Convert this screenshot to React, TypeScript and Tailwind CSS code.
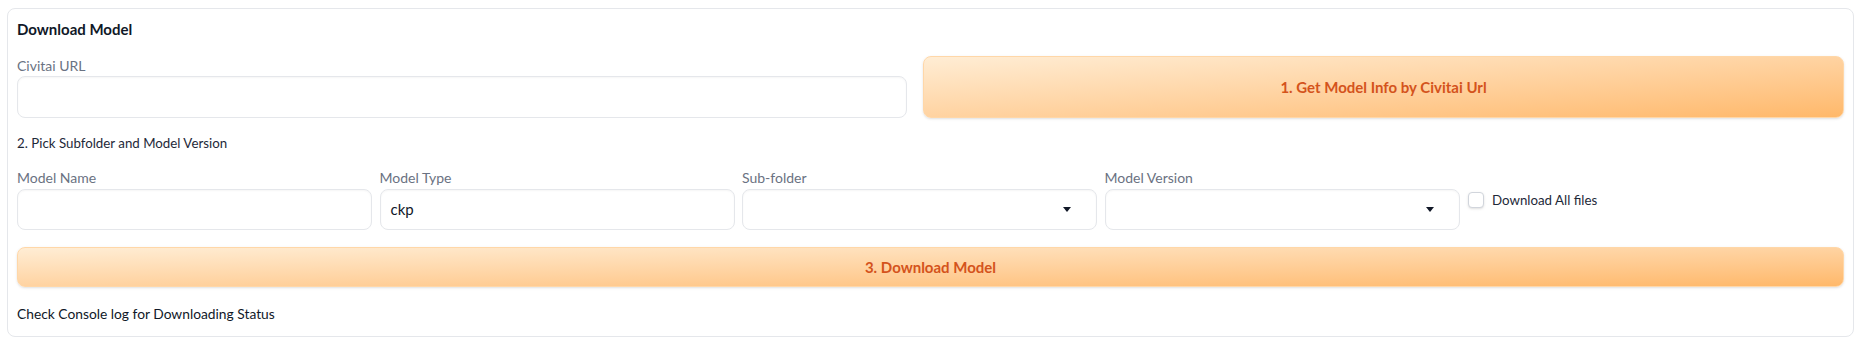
import React from "react";

const font = { fontFamily: '"Lato", "Liberation Sans", sans-serif' };

function Caret() {
  return (
    <svg width="8" height="5" viewBox="0 0 8 5" className="shrink-0">
      <path d="M0 0 L8 0 L4 5 Z" fill="#111827" />
    </svg>
  );
}

function Field({ label, value, dropdown }: { label: string; value?: string; dropdown?: boolean }) {
  return (
    <div className="flex flex-col w-[355px] shrink-0">
      <div className="h-[20px] leading-[20px] text-[14px] text-gray-500">{label}</div>
      <div className="mt-px h-[41px] rounded-lg border border-gray-200 bg-white shadow-[inset_0_1px_2px_rgba(0,0,0,0.04)] flex items-center px-[10px] justify-between">
        <span className="text-[15px] text-gray-900">{value ?? ""}</span>
        {dropdown && <span className="mr-[15px] flex items-center"><Caret /></span>}
      </div>
    </div>
  );
}

export default function App() {
  return (
    <div className="bg-white w-full h-[347px] pt-[8px] px-[7px]" style={font}>
      <div className="border border-gray-200 rounded-lg pt-[11px] pb-[12px] px-[9px] flex flex-col">
        <div className="h-[19px] leading-[19px] text-[15px] font-bold text-gray-900">Download Model</div>

        <div className="mt-[17px] flex gap-[16px]">
          <div className="flex-1 flex flex-col">
            <div className="h-[20px] leading-[20px] text-[14px] text-gray-500">Civitai URL</div>
            <div className="h-[42px] rounded-lg border border-gray-200 bg-white shadow-[inset_0_1px_2px_rgba(0,0,0,0.04)]" />
          </div>
          <button className="w-[921px] h-[62px] rounded-lg border border-orange-200 bg-gradient-to-br from-orange-100 to-orange-300 text-[#d4531c] font-bold text-[15px] shadow-sm">
            1. Get Model Info by Civitai Url
          </button>
        </div>

        <div className="mt-[15px] h-[20px] leading-[20px] text-[13.3px] text-gray-800">2. Pick Subfolder and Model Version</div>

        <div className="mt-[15px] flex gap-[7.5px]">
          <Field label="Model Name" />
          <Field label="Model Type" value="ckp" />
          <Field label="Sub-folder" dropdown />
          <Field label="Model Version" dropdown />
          <div className="flex-1 pt-[24px] pl-[1px] flex items-start gap-[8px]">
            <div className="w-[16px] h-[16px] rounded-[4px] border border-gray-300 bg-white shadow-sm shrink-0" />
            <span className="text-[13.3px] leading-[16px] text-gray-800">Download All files</span>
          </div>
        </div>

        <button className="mt-[17px] h-[40px] w-full rounded-lg border border-orange-200 bg-gradient-to-br from-orange-100 to-orange-300 text-[#d4531c] font-bold text-[15px] shadow-sm">
          3. Download Model
        </button>

        <div className="mt-[17px] h-[20px] leading-[20px] text-[13.8px] text-gray-900">Check Console log for Downloading Status</div>
      </div>
    </div>
  );
}
